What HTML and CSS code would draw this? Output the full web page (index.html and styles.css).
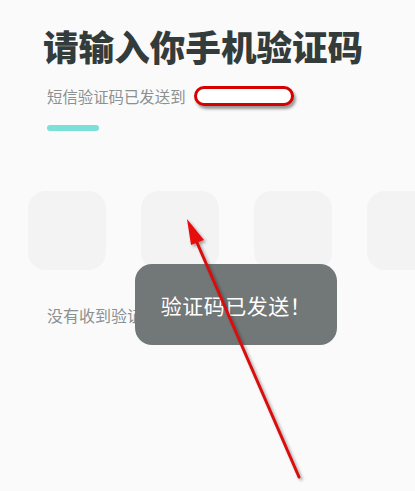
FILE: index.html
```html
<!DOCTYPE html>
<html lang="zh-CN">
<head>
    <meta charset="UTF-8">
    <meta name="viewport" content="width=device-width, initial-scale=1.0">
    <title>验证码</title>
    <link rel="stylesheet" href="styles.css">
</head>
<body>
    <div class="page">
        <h1 class="title">请输入你手机验证码</h1>
        <p class="sub">短信验证码已发送到 <span class="phone"></span></p>
        <div class="bar"></div>

        <div class="codes">
            <div class="code"></div>
            <div class="code"></div>
            <div class="code"></div>
            <div class="code"></div>
        </div>

        <p class="resend">没有收到验证码？(58s)</p>
    </div>

    <div class="toast">验证码已发送！</div>

    <svg class="arrow" width="415" height="491" viewBox="0 0 415 491">
        <defs>
            <filter id="sh" x="-20%" y="-20%" width="140%" height="140%">
                <feDropShadow dx="2" dy="2" stdDeviation="1.5" flood-color="#000" flood-opacity="0.35"/>
            </filter>
        </defs>
        <g filter="url(#sh)">
            <line x1="299" y1="477" x2="195" y2="238" stroke="#d90c0c" stroke-width="3" stroke-linecap="round"/>
            <polygon points="187,219 204,240 191,245" fill="#e80c0c"/>
        </g>
    </svg>
</body>
</html>
```

FILE: styles.css
```css
body {
    margin: 0;
    background: #fafafa;
    font-family: "Noto Sans CJK SC", "Noto Sans", sans-serif;
    width: 415px;
    height: 491px;
    overflow: hidden;
    position: relative;
}
.page {
    padding-top: 22px;
}
.title {
    margin: 0 0 0 43px;
    font-size: 35.6px;
    font-weight: 900;
    line-height: 48px;
    color: #343b3b;
}
.sub {
    margin: 15px 0 0 47px;
    font-size: 15.4px;
    line-height: 22px;
    color: #8b9090;
    display: flex;
    align-items: center;
}
.phone {
    display: inline-block;
    width: 94px;
    height: 14px;
    margin-left: 8px;
    background: #fff;
    border: 3px solid #d60000;
    border-radius: 10px;
    box-shadow: 2px 3px 3px rgba(0, 0, 0, 0.4);
}
.bar {
    margin: 18px 0 0 47px;
    width: 52px;
    height: 6px;
    border-radius: 3px;
    background: #7be0d7;
}
.codes {
    display: flex;
    gap: 35px;
    margin-top: 60px;
    padding-left: 28px;
    overflow: hidden;
}
.code {
    flex: 0 0 78px;
    height: 79px;
    border-radius: 18px;
    background: #f3f3f3;
}
.resend {
    margin: 34px 0 0 47px;
    font-size: 16px;
    line-height: 22px;
    color: #8b9090;
}
.toast {
    position: absolute;
    left: 135px;
    top: 264px;
    width: 202px;
    height: 81px;
    border-radius: 17px;
    background: #727878;
    color: #fff;
    font-size: 21px;
    display: flex;
    align-items: center;
    justify-content: center;
    letter-spacing: 0.5px;
}
.arrow {
    position: absolute;
    left: 0;
    top: 0;
}
```
